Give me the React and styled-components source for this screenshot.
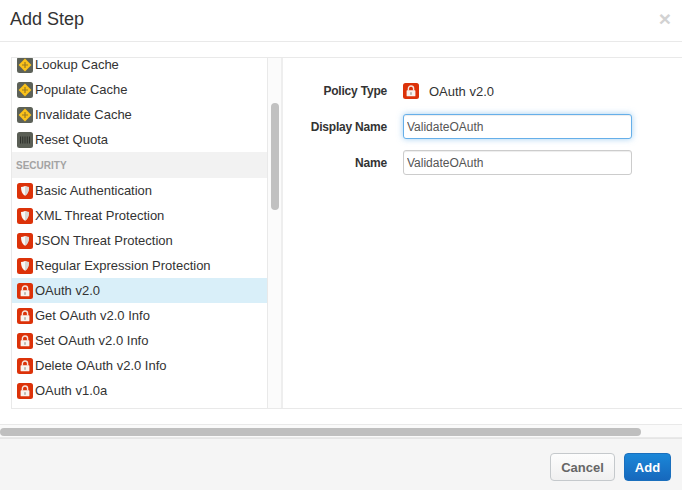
import React from "react";
import styled, { createGlobalStyle } from "styled-components";

const Global = createGlobalStyle`
  html, body { margin: 0; padding: 0; background: #fff; }
  body { font-family: "Liberation Sans", Arial, sans-serif; color: #333; }
`;

const Modal = styled.div`
  width: 682px; height: 490px; display: flex; flex-direction: column; overflow: hidden; background: #fff;
`;
const Header = styled.header`
  height: 41px; flex: none; box-sizing: content-box; border-bottom: 1px solid #e9e9e9;
  display: flex; align-items: center; justify-content: space-between; padding: 0 11px 0 10px;
`;
const Title = styled.h1`
  margin: 0; font-size: 18px; font-weight: 400; color: #333; position: relative; top: -1px;
`;
const Close = styled.span`
  font-size: 21px; font-weight: 700; color: #d2d2d2; line-height: 1; position: relative; top: -2px;
`;
const Body = styled.div`
  flex: none; height: 382px; padding: 15px 0 0 11px; box-sizing: border-box; display: flex; flex-direction: column;
`;
const Panels = styled.div`
  height: 352px; flex: none; display: flex; box-sizing: border-box;
  border: 1px solid #e9e9e9; border-right: 0;
`;
const ListPane = styled.div`
  width: 255px; flex: none; overflow: hidden; border-right: 1px solid #e9e9e9;
`;
const List = styled.ul`
  list-style: none; margin: -6px 0 0; padding: 0;
`;
const Row = styled.li`
  height: 25px; display: flex; align-items: center; padding-left: 5px; gap: 2px;
  font-size: 13px; color: #333;
  background: ${p => (p.$selected ? "#d9eff9" : "transparent")};
`;
const SectionHead = styled.li`
  height: 26px; display: flex; align-items: center; padding-left: 4px;
  font-size: 10px; font-weight: 700; color: #a3a3a3; background: #f2f2f2;
`;
const IconBox = styled.svg`
  width: 16px; height: 16px; flex: none; display: block;
`;
const ScrollTrack = styled.div`
  width: 15px; flex: none; background: #fbfbfb; border-right: 2px solid #eeeeee; padding: 45px 0 0 3px; box-sizing: border-box;
`;
const VThumb = styled.div`
  width: 8px; height: 107px; border-radius: 4px; background: #c1c1c1;
`;
const FormPane = styled.div`
  flex: 1; padding: 21px 0 0 0; display: flex; flex-direction: column;
`;
const FormRow = styled.div`
  display: flex; align-items: center; height: ${p => p.$h}px; margin-bottom: ${p => p.$mb || 0}px;
`;
const Label = styled.label`
  width: 104px; flex: none; text-align: right; font-size: 12px; font-weight: 700; color: #333; margin-right: 16px; letter-spacing: -0.2px;
`;
const TypeValue = styled.div`
  display: flex; align-items: center; gap: 10px; font-size: 13px; color: #333;
`;
const Input = styled.input`
  width: 229px; height: 25px; box-sizing: border-box; padding: 0 3px; margin: 0; font: 12px "Liberation Sans", Arial, sans-serif;
  color: #555; border-radius: 3px; outline: none; background: #fff;
  border: 1px solid ${p => (p.$focus ? "#66afe9" : "#ccc")};
  box-shadow: ${p => (p.$focus ? "inset 0 1px 1px rgba(0,0,0,.075), 0 0 6px rgba(102,175,233,.6)" : "inset 0 1px 1px rgba(0,0,0,.075)")};
`;
const HScroll = styled.div`
  height: 14px; flex: none; box-sizing: border-box; background: #fafafa; border-top: 1px solid #e9e9e9; border-bottom: 1px solid #e9e9e9; padding-top: 3px;
`;
const HThumb = styled.div`
  width: 641px; height: 8px; border-radius: 4px; background: #bfbfbf;
`;
const Footer = styled.footer`
  flex: 1; background: #f5f5f5; border-top: 1px solid #e5e5e5; display: flex; justify-content: flex-end; align-items: flex-start;
  padding: 14px 11px 0 0; gap: 9px;
`;
const Button = styled.button`
  height: 28px; box-sizing: border-box; margin: 0; padding: 0; font: 700 13px "Liberation Sans", Arial, sans-serif; border-radius: 4px;
  width: ${p => (p.$primary ? "47px" : "65px")};
  color: ${p => (p.$primary ? "#fff" : "#666")};
  border: 1px solid ${p => (p.$primary ? "#1a6fbd" : "#c5c9cc")};
  background: ${p => (p.$primary ? "linear-gradient(#1b87d8,#1668bd)" : "linear-gradient(#fdfdfd,#f0f0f0)")};
`;

const Bg = ({ c }) => <rect x="0" y="0" width="16" height="16" rx="2.5" fill={c} />;

const CacheIcon = () => (
  <IconBox viewBox="0 0 16 16">
    <Bg c="#5d6259" />
    <path d="M8 1.6 14.4 8 8 14.4 1.6 8Z" fill="#fbc21a" />
    <path d="M8 5v6M5 8h6" stroke="#9a7b22" strokeWidth="1.2" />
  </IconBox>
);
const QuotaIcon = () => (
  <IconBox viewBox="0 0 16 16">
    <Bg c="#5a5e55" />
    <path d="M3.5 4.5v7M5.75 4.5v7M8 4.5v7M10.25 4.5v7M12.5 4.5v7" stroke="#2d2f2a" strokeWidth="1" />
  </IconBox>
);
const ShieldIcon = () => (
  <IconBox viewBox="0 0 16 16">
    <Bg c="#dc3209" />
    <path d="M8 3c1.4.7 2.8 1 4 1 0 4-1.1 6.800-4 8.800C5.100 10.800 4 8 4 4c1.200 0 2.600-.3 4-1Z" fill="#f8f8f6" />
    <path d="M8 3c1.400.7 2.800 1 4 1 0 4-1.100 6.800-4 8.800Z" fill="#d8d8d4" />
  </IconBox>
);
const LockIcon = () => (
  <IconBox viewBox="0 0 16 16">
    <Bg c="#dc3209" />
    <path d="M5.400 7.500V5.600a2.600 2.600 0 0 1 5.200 0v1.900" fill="none" stroke="#f6e4dc" strokeWidth="1.400" />
    <rect x="3.600" y="7.300" width="8.800" height="6" rx=".6" fill="#f8f3ef" />
    <rect x="7.300" y="9.200" width="1.400" height="2.600" fill="#a9a39c" />
  </IconBox>
);

const items = [
  ["Lookup Cache", CacheIcon], ["Populate Cache", CacheIcon], ["Invalidate Cache", CacheIcon], ["Reset Quota", QuotaIcon],
  { section: "SECURITY" },
  ["Basic Authentication", ShieldIcon], ["XML Threat Protection", ShieldIcon], ["JSON Threat Protection", ShieldIcon],
  ["Regular Expression Protection", ShieldIcon], ["OAuth v2.0", LockIcon, true], ["Get OAuth v2.0 Info", LockIcon],
  ["Set OAuth v2.0 Info", LockIcon], ["Delete OAuth v2.0 Info", LockIcon], ["OAuth v1.0a", LockIcon],
];

export default function App() {
  return (
    <Modal>
      <Global />
      <Header>
        <Title>Add Step</Title>
        <Close>×</Close>
      </Header>
      <Body>
        <Panels>
          <ListPane>
            <List>
              {items.map((it) => {
                if (it.section) return <SectionHead key={it.section}>{it.section}</SectionHead>;
                const [name, Icon, sel] = it;
                return <Row key={name} $selected={sel}><Icon />{name}</Row>;
              })}
            </List>
          </ListPane>
          <ScrollTrack><VThumb /></ScrollTrack>
          <FormPane>
            <FormRow $h={24} $mb={11}>
              <Label>Policy Type</Label>
              <TypeValue><LockIcon />OAuth v2.0</TypeValue>
            </FormRow>
            <FormRow $h={25} $mb={11}>
              <Label>Display Name</Label>
              <Input $focus readOnly value="ValidateOAuth" />
            </FormRow>
            <FormRow $h={25}>
              <Label>Name</Label>
              <Input readOnly value="ValidateOAuth" />
            </FormRow>
          </FormPane>
        </Panels>
      </Body>
      <HScroll><HThumb /></HScroll>
      <Footer>
        <Button>Cancel</Button>
        <Button $primary>Add</Button>
      </Footer>
    </Modal>
  );
}
